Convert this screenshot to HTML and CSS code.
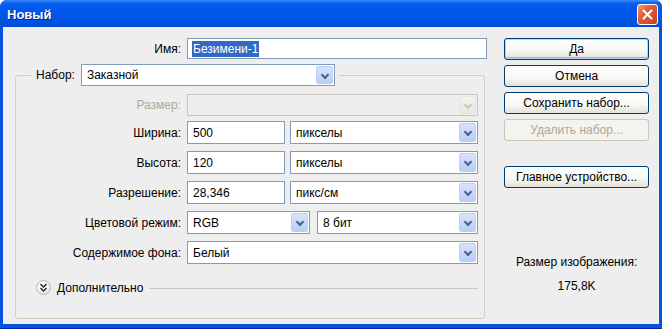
FILE: index.html
```html
<!DOCTYPE html>
<html lang="ru">
<head>
    <meta charset="UTF-8">
    <title>Новый</title>
    <link rel="stylesheet" href="styles.css">
</head>
<body>
    <div class="window">
        <div class="titlebar">
            <span class="title">Новый</span>
            <span class="close-btn">
                <svg width="11" height="11" viewBox="0 0 11 11"><path d="M1.5 1.5 L9.5 9.5 M9.5 1.5 L1.5 9.5" stroke="#fff" stroke-width="2" stroke-linecap="round"/></svg>
            </span>
        </div>
        <div class="client">
            <div class="main">
                <div class="name-row">
                    <span class="lbl">Имя:</span>
                    <div class="field name-field"><span class="selected">Безимени-1</span></div>
                </div>
                <fieldset class="group">
                    <legend>
                        <span class="legend-lbl">Набор:</span>
                        <div class="field combo preset">Заказной<span class="arrow"></span></div>
                    </legend>

                    <div class="row row-size">
                        <span class="lbl disabled">Размер:</span>
                        <div class="field combo wide disabled"><span class="arrow"></span></div>
                    </div>
                    <div class="row">
                        <span class="lbl">Ширина:</span>
                        <div class="field num">500</div>
                        <div class="field combo unit">пикселы<span class="arrow"></span></div>
                    </div>
                    <div class="row">
                        <span class="lbl">Высота:</span>
                        <div class="field num">120</div>
                        <div class="field combo unit">пикселы<span class="arrow"></span></div>
                    </div>
                    <div class="row">
                        <span class="lbl">Разрешение:</span>
                        <div class="field num">28,346</div>
                        <div class="field combo unit">пикс/см<span class="arrow"></span></div>
                    </div>
                    <div class="row">
                        <span class="lbl">Цветовой режим:</span>
                        <div class="field combo mode">RGB<span class="arrow"></span></div>
                        <div class="field combo depth">8 бит<span class="arrow"></span></div>
                    </div>
                    <div class="row">
                        <span class="lbl">Содержимое фона:</span>
                        <div class="field combo wide">Белый<span class="arrow"></span></div>
                    </div>

                    <div class="advanced">
                        <span class="expand">
                            <svg width="9" height="9" viewBox="0 0 9 9"><path d="M1.5 1 L4.5 4 L7.5 1 M1.5 5 L4.5 8 L7.5 5" fill="none" stroke="#222" stroke-width="1.4"/></svg>
                        </span>
                        <span class="adv-text">Дополнительно</span>
                        <span class="adv-line"></span>
                    </div>
                </fieldset>
            </div>

            <div class="side">
                <button class="btn default">Да</button>
                <button class="btn">Отмена</button>
                <button class="btn">Сохранить набор...</button>
                <button class="btn" disabled>Удалить набор...</button>
                <button class="btn device">Главное устройство...</button>
                <div class="size-info">
                    <div>Размер изображения:</div>
                    <div class="size-value">175,8K</div>
                </div>
            </div>
        </div>
    </div>
</body>
</html>
```

FILE: styles.css
```css
* {
    margin: 0;
    padding: 0;
    box-sizing: border-box;
}

body {
    font-family: 'Liberation Sans', Arial, sans-serif;
    font-size: 12px;
    color: #000;
    background: #fff;
}

.window {
    width: 662px;
    height: 329px;
    background: #0553e2;
    border-radius: 7px 7px 0 0;
    display: flex;
    flex-direction: column;
    padding: 0 3px 4px 3px;
    border-bottom: 1px solid #0a2a9c;
}

.titlebar {
    height: 27px;
    margin: 0 -3px;
    padding: 0 4px 0 7px;
    display: flex;
    align-items: center;
    justify-content: space-between;
    border-radius: 7px 7px 0 0;
    background: linear-gradient(#3d8ffc 0, #0a62f0 3px, #0058ee 8px, #0055e5 18px, #0051df 24px, #0348d6 27px);
}

.title {
    color: #fff;
    font-weight: bold;
    font-size: 13px;
    text-shadow: 1px 1px 0 #0a1e8a;
    padding-top: 1px;
}

.close-btn {
    width: 21px;
    height: 21px;
    border: 1px solid #fff;
    border-radius: 3px;
    background: linear-gradient(135deg, #f0a080 0, #e2603a 35%, #c8401c 100%);
    display: flex;
    align-items: center;
    justify-content: center;
    margin-top: 1px;
}

.client {
    flex: 1;
    background: #eeeeee;
    display: flex;
    padding: 11px 10px 0 12px;
}

.main {
    width: 476px;
}

.name-row {
    display: flex;
    align-items: center;
}

.lbl {
    width: 166px;
    margin-right: 6px;
    text-align: right;
    white-space: nowrap;
}

.disabled {
    color: #aca899;
}

.field {
    height: 22px;
    border: 1px solid #7f9db9;
    background: #fff;
    display: flex;
    align-items: center;
    padding-left: 5px;
    position: relative;
    white-space: nowrap;
}

.name-field {
    width: 300px;
    height: 21px;
    padding-left: 4px;
}

.selected {
    background: #316ac5;
    color: #fff;
    padding: 1px;
}

.group {
    margin-top: 5px;
    width: 470px;
    height: 255px;
    border: 1px solid #d0d0bf;
    border-radius: 3px;
    padding: 0;
}

.group legend {
    margin-left: 16px;
    padding: 0 4px;
    display: flex;
    align-items: center;
}

.legend-lbl {
    margin-right: 6px;
}

.combo {
    padding-right: 20px;
}

.arrow {
    position: absolute;
    right: 1px;
    top: 1px;
    bottom: 1px;
    width: 17px;
    border: 1px solid #bcd0f8;
    border-radius: 2px;
    background: linear-gradient(#d6e3fd, #b9cdf7);
}

.arrow::after {
    content: "";
    position: absolute;
    left: 5px;
    top: 5px;
    width: 4px;
    height: 4px;
    border-right: 2px solid #4d6185;
    border-bottom: 2px solid #4d6185;
    transform: rotate(45deg);
}

.disabled .arrow {
    border-color: #e8e6dc;
    background: linear-gradient(#f4f3ee, #e9e7df);
}

.disabled .arrow::after {
    border-color: #c9c7ba;
}

.field.disabled {
    border-color: #c9c7ba;
    background: #eeeeee;
}

.preset {
    width: 254px;
}

.row {
    display: flex;
    align-items: center;
    margin-top: 7px;
}

.row .lbl {
    width: 165px;
    margin-right: 6px;
}

.row-size {
    margin-top: 8px;
    margin-bottom: -2px;
}

.row .field {
    height: 23px;
}

.row-size .field {
    height: 22px;
}

.wide {
    width: 291px;
}

.num {
    width: 98px;
    margin-right: 5px;
}

.unit {
    width: 188px;
}

.mode {
    width: 123px;
    margin-right: 7px;
}

.depth {
    width: 161px;
}

.advanced {
    display: flex;
    align-items: center;
    margin: 16px 0 0 20px;
}

.expand {
    width: 15px;
    height: 15px;
    border-radius: 50%;
    border: 1px solid #b5b5b0;
    background: radial-gradient(circle at 40% 35%, #ffffff 0, #f4f4f0 50%, #d8d8d0 100%);
    display: flex;
    align-items: center;
    justify-content: center;
}

.adv-text {
    margin-left: 6px;
}

.adv-line {
    flex: 1;
    height: 1px;
    background: #c8c8c0;
    margin: 2px 6px 0 6px;
}

.side {
    margin-left: 17px;
    width: 146px;
    display: flex;
    flex-direction: column;
}

.btn {
    height: 22px;
    margin-bottom: 5px;
    border: 1px solid #003c74;
    border-radius: 3px;
    background: linear-gradient(#ffffff 0, #f7f7f3 60%, #e4e1d6 100%);
    font-family: 'Liberation Sans', Arial, sans-serif;
    font-size: 12px;
    color: #000;
}

.btn.default {
    box-shadow: inset 0 0 0 1px #bcd2f6, inset 0 -1px 0 1px #99b6ea;
}

.btn:disabled {
    border-color: #c9c7ba;
    background: #f4f3ee;
    color: #aca899;
}

.btn.device {
    margin-top: 20px;
}

.size-info {
    margin-top: 57px;
    text-align: center;
    line-height: 24px;
}
```
